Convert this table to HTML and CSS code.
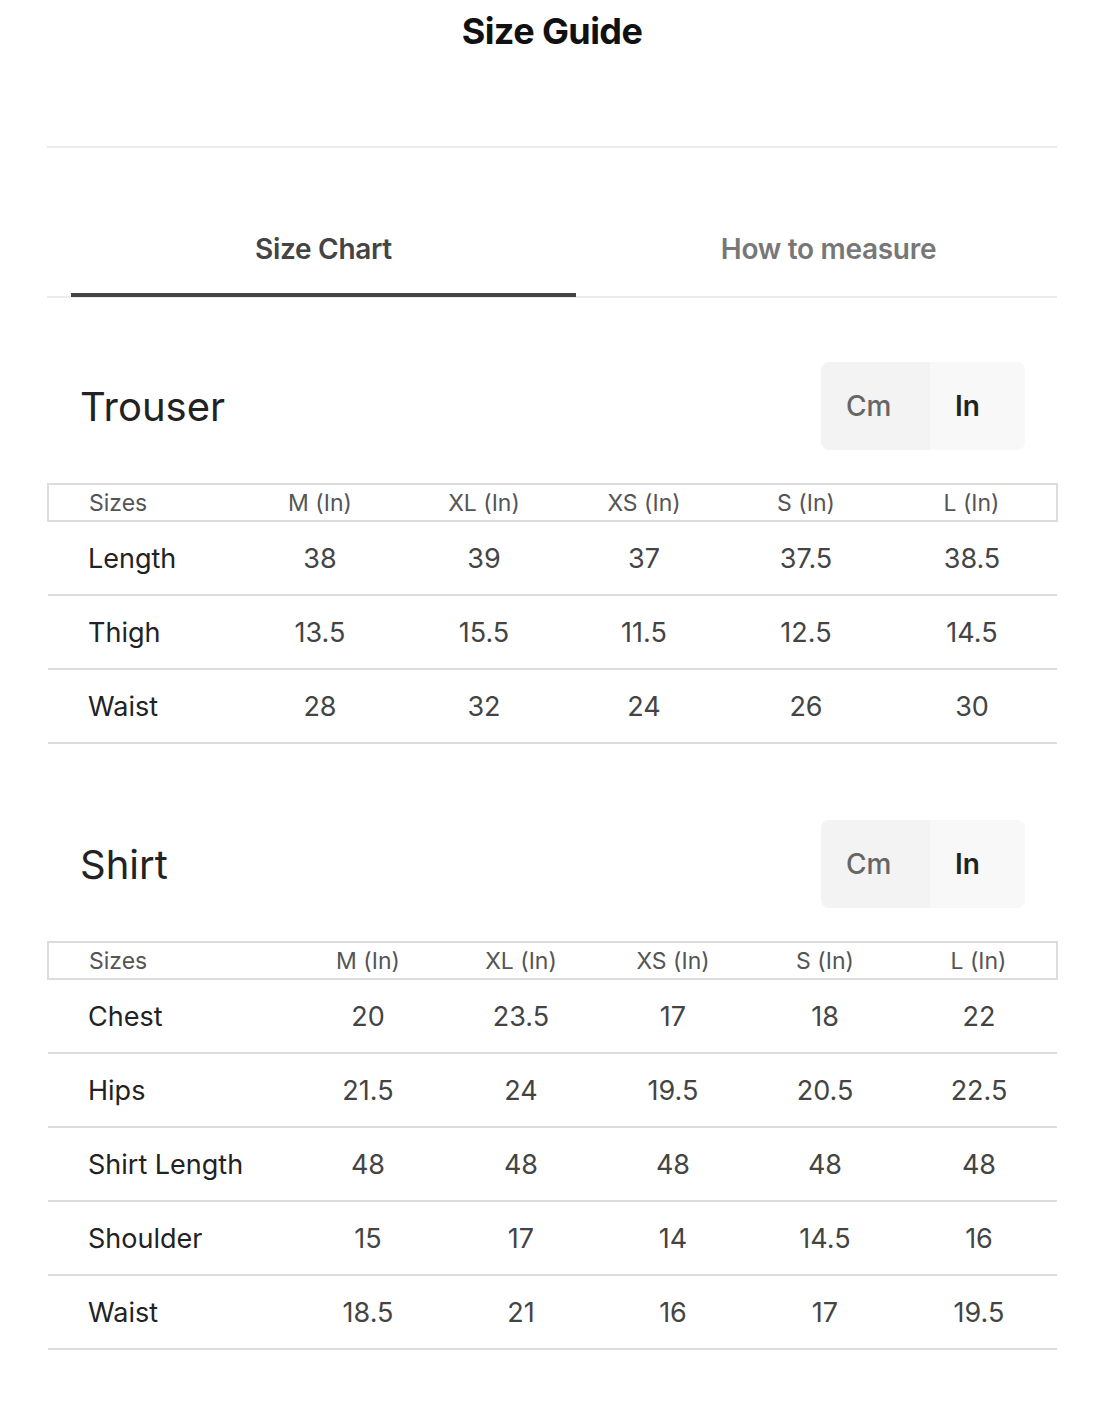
FILE: index.html
```html
<!DOCTYPE html>
<html lang="en">
<head>
<meta charset="utf-8">
<title>Size Guide</title>
<link rel="stylesheet" href="styles.css">
</head>
<body>
<div class="page">
  <header class="top">
    <h1 class="title">Size Guide</h1>
  </header>
  <div class="divider"></div>
  <nav class="tabs">
    <div class="tab active">Size Chart</div>
    <div class="tab">How to measure</div>
  </nav>

  <section class="section first">
    <div class="section-head">
      <h2 class="section-title">Trouser</h2>
      <div class="toggle">
        <span class="opt cm">Cm</span>
        <span class="opt in">In</span>
      </div>
    </div>
    <table class="chart">
      <colgroup>
        <col class="c-label-t"><col class="c-t1"><col class="c-t2"><col class="c-t3"><col class="c-t4"><col class="c-t5">
      </colgroup>
      <thead>
        <tr><th class="lbl">Sizes</th><th>M (In)</th><th>XL (In)</th><th>XS (In)</th><th>S (In)</th><th>L (In)</th></tr>
      </thead>
      <tbody>
        <tr><td class="lbl">Length</td><td>38</td><td>39</td><td>37</td><td>37.5</td><td>38.5</td></tr>
        <tr><td class="lbl">Thigh</td><td>13.5</td><td>15.5</td><td>11.5</td><td>12.5</td><td>14.5</td></tr>
        <tr><td class="lbl">Waist</td><td>28</td><td>32</td><td>24</td><td>26</td><td>30</td></tr>
      </tbody>
    </table>
  </section>

  <section class="section second">
    <div class="section-head">
      <h2 class="section-title">Shirt</h2>
      <div class="toggle">
        <span class="opt cm">Cm</span>
        <span class="opt in">In</span>
      </div>
    </div>
    <table class="chart">
      <colgroup>
        <col class="c-label-s"><col class="c-s1"><col class="c-s2"><col class="c-s3"><col class="c-s4"><col class="c-s5">
      </colgroup>
      <thead>
        <tr><th class="lbl">Sizes</th><th>M (In)</th><th>XL (In)</th><th>XS (In)</th><th>S (In)</th><th>L (In)</th></tr>
      </thead>
      <tbody>
        <tr><td class="lbl">Chest</td><td>20</td><td>23.5</td><td>17</td><td>18</td><td>22</td></tr>
        <tr><td class="lbl">Hips</td><td>21.5</td><td>24</td><td>19.5</td><td>20.5</td><td>22.5</td></tr>
        <tr><td class="lbl">Shirt Length</td><td>48</td><td>48</td><td>48</td><td>48</td><td>48</td></tr>
        <tr><td class="lbl">Shoulder</td><td>15</td><td>17</td><td>14</td><td>14.5</td><td>16</td></tr>
        <tr><td class="lbl">Waist</td><td>18.5</td><td>21</td><td>16</td><td>17</td><td>19.5</td></tr>
      </tbody>
    </table>
  </section>
</div>
</body>
</html>
```

FILE: styles.css
```css
* { box-sizing: border-box; }
html, body {
  margin: 0;
  padding: 0;
  background: #ffffff;
}
body {
  font-family: Inter, "Noto Sans", "Liberation Sans", sans-serif;
  color: #222;
}
.page {
  width: 1010px;
  margin-left: 47px;
}
.top {
  height: 146px;
  display: flex;
  justify-content: center;
}
.title {
  margin: 8px 0 0;
  font-size: 36px;
  line-height: 46px;
  font-weight: 700;
  color: #111;
  letter-spacing: -0.6px;
}
.divider {
  height: 2px;
  background: #ececec;
}
.tabs {
  display: flex;
  padding-left: 24px;
  margin-top: 80px;
  border-bottom: 2px solid #ececec;
  height: 70px;
}
.tab {
  flex: 0 0 505px;
  text-align: center;
  font-size: 28px;
  line-height: 42px;
  font-weight: 600;
  color: #777;
  letter-spacing: -0.3px;
  height: 70px;
}
.tab.active {
  color: #444;
  border-bottom: 4px solid #444;
  height: 69px;
}
.section.first { margin-top: 64px; }
.section.second { margin-top: 76px; }
.section-head {
  display: flex;
  align-items: center;
  justify-content: space-between;
  padding: 0 32px 0 33px;
  height: 88px;
  margin-bottom: 33px;
}
.section-title {
  margin: 0;
  font-size: 40px;
  font-weight: 400;
  color: #222;
}
.toggle {
  display: flex;
  height: 88px;
  border-radius: 8px;
  overflow: hidden;
}
.opt {
  display: flex;
  align-items: center;
  justify-content: flex-start;
  padding-left: 25px;
  font-size: 28px;
}
.opt.cm {
  width: 109px;
  background: #f3f3f3;
  color: #666;
  font-weight: 500;
}
.opt.in {
  width: 95px;
  background: #f8f8f8;
  color: #222;
  font-weight: 600;
}
.chart {
  width: 1009px;
  border-collapse: collapse;
  table-layout: fixed;
}
.chart th {
  height: 37px;
  padding: 0;
  font-size: 23px;
  font-weight: 400;
  color: #555;
  text-align: center;
  border-top: 2px solid #dcdcdc;
  border-bottom: 2px solid #dcdcdc;
}
.chart th:first-child { border-left: 2px solid #dcdcdc; }
.chart th:last-child { border-right: 2px solid #dcdcdc; }
.chart td {
  height: 74px;
  padding: 0;
  font-size: 27px;
  color: #444;
  text-align: center;
  border-bottom: 2px solid #dcdcdc;
}
.chart .lbl {
  text-align: left;
  padding-left: 40px;
}
.chart td.lbl { color: #222; }
.c-label-t { width: 187px; }
.c-t1 { width: 170px; }
.c-t2 { width: 158px; }
.c-t3 { width: 162px; }
.c-t4 { width: 162px; }
.c-t5 { width: 170px; }
.c-label-s { width: 243px; }
.c-s1 { width: 154px; }
.c-s2 { width: 152px; }
.c-s3 { width: 152px; }
.c-s4 { width: 152px; }
.c-s5 { width: 156px; }
```
